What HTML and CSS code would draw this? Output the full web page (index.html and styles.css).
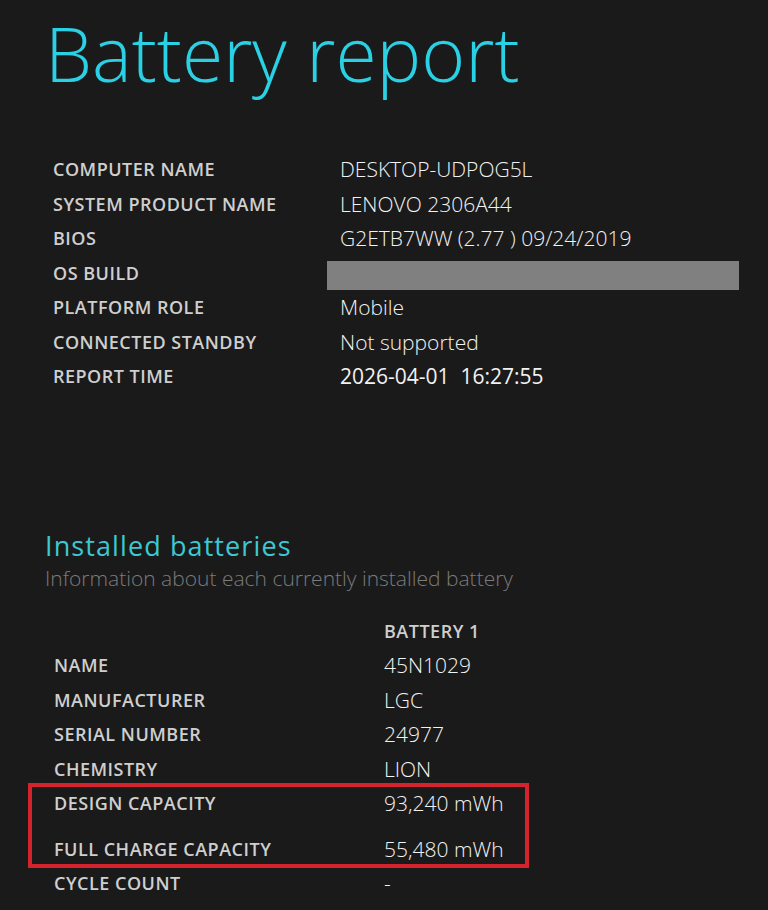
FILE: index.html
```html
<!DOCTYPE html>
<html lang="en">
<head>
    <meta charset="UTF-8">
    <title>Battery report</title>
    <link rel="stylesheet" href="styles.css">
</head>
<body>
    <h1 class="title">Battery report</h1>

    <table class="info system">
        <tr><td class="label">COMPUTER NAME</td><td class="value">DESKTOP-UDPOG5L</td></tr>
        <tr><td class="label">SYSTEM PRODUCT NAME</td><td class="value">LENOVO 2306A44</td></tr>
        <tr><td class="label">BIOS</td><td class="value">G2ETB7WW (2.77 ) 09/24/2019</td></tr>
        <tr><td class="label">OS BUILD</td><td class="value redacted"><div class="blank"></div></td></tr>
        <tr><td class="label">PLATFORM ROLE</td><td class="value">Mobile</td></tr>
        <tr><td class="label">CONNECTED STANDBY</td><td class="value">Not supported</td></tr>
        <tr><td class="label">REPORT TIME</td><td class="value time">2026-04-01&nbsp; 16:27:55</td></tr>
    </table>

    <h2 class="section-title">Installed batteries</h2>
    <div class="section-sub">Information about each currently installed battery</div>

    <div class="batteries">
        <div class="battery-head">
            <span></span>
            <span class="col-head">BATTERY 1</span>
        </div>
        <div class="battery-row"><span class="label">NAME</span><span class="value">45N1029</span></div>
        <div class="battery-row"><span class="label">MANUFACTURER</span><span class="value">LGC</span></div>
        <div class="battery-row"><span class="label">SERIAL NUMBER</span><span class="value">24977</span></div>
        <div class="battery-row"><span class="label">CHEMISTRY</span><span class="value">LION</span></div>
        <div class="highlight">
            <div class="battery-row"><span class="label">DESIGN CAPACITY</span><span class="value">93,240 mWh</span></div>
            <div class="battery-row"><span class="label">FULL CHARGE CAPACITY</span><span class="value">55,480 mWh</span></div>
        </div>
        <div class="battery-row last"><span class="label">CYCLE COUNT</span><span class="value">-</span></div>
    </div>
</body>
</html>
```

FILE: styles.css
```css
body {
    background-color: #1a1a1a;
    color: #e6e6e6;
    font-family: "Open Sans", "Noto Sans", sans-serif;
    margin: 0;
    padding: 0 0 0 45px;
    overflow: hidden;
}
.title {
    font-size: 75px;
    font-weight: 300;
    color: #2ad0e4;
    margin: 0;
    padding-top: 3px;
    line-height: 100px;
}
.info {
    border-collapse: collapse;
    margin-top: 49px;
    margin-left: -4px;
}
.info td {
    height: 34.5px;
    padding: 0;
    vertical-align: middle;
}
.label {
    font-size: 18px;
    font-weight: 600;
    letter-spacing: 0.5px;
    color: #cfcfcf;
    padding-left: 9px;
}
.info .label {
    width: 280px;
    padding-left: 12px;
}
.value {
    font-size: 21px;
    font-weight: 300;
    color: #f2f2f2;
}
.info .value {
    padding-left: 7px;
}
.info .redacted {
    padding-left: 0;
}
.blank {
    width: 412px;
    height: 29px;
    margin: 5px 0 0 -6px;
    background-color: #808080;
}
.time {
    font-weight: 400;
}
.section-title {
    font-size: 27px;
    font-weight: 400;
    letter-spacing: 1.1px;
    color: #3cc8d2;
    margin: 136px 0 0 0;
    line-height: 32px;
}
.section-sub {
    font-size: 21px;
    font-weight: 300;
    color: #7a7a7a;
    line-height: 32px;
}
.batteries {
    margin-top: 20px;
    width: 484px;
}
.battery-head, .battery-row {
    display: grid;
    grid-template-columns: 339px 1fr;
    height: 34.5px;
    align-items: center;
}
.col-head {
    font-size: 18px;
    font-weight: 600;
    letter-spacing: 0.5px;
    color: #cfcfcf;
}
.highlight {
    border: 4px solid #d4232c;
    margin: -3px 0 0 -17px;
    padding: 0 0 0 13px;
    height: 77px;
    display: flex;
    flex-direction: column;
    justify-content: space-between;
}
.highlight .battery-row {
    height: 31px;
}
.battery-row.last {
    height: 30px;
}
```
